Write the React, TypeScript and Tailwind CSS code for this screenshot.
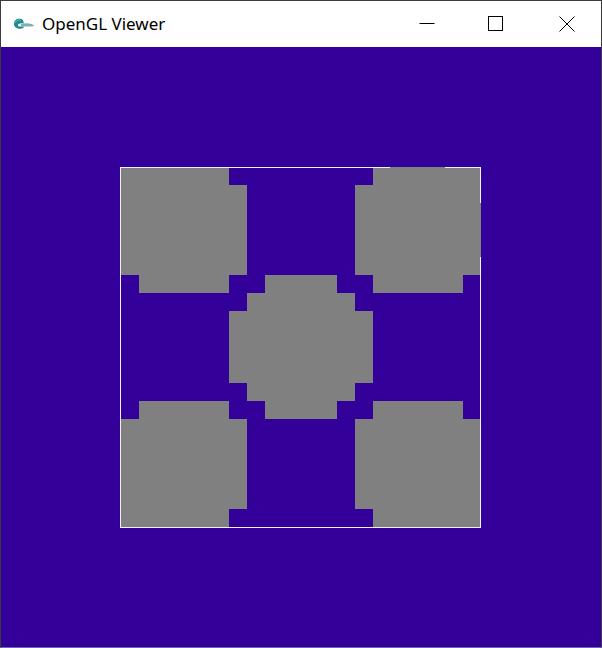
import React from 'react'

type Cell = [number, number, number, number]

// [rowStart, rowEnd, colStart, colEnd] on the 20x20 grid, cell = 18px
const cells: Cell[] = [
  // top left
  [0, 0, 0, 5], [1, 5, 0, 6], [6, 6, 1, 5],
  // top right
  [0, 0, 14, 19], [1, 5, 13, 19], [6, 6, 14, 18],
  // centre
  [6, 6, 8, 11], [7, 7, 7, 12], [8, 11, 6, 13], [12, 12, 7, 12], [13, 13, 8, 11],
  // bottom left
  [13, 13, 1, 5], [14, 18, 0, 6], [19, 19, 0, 5],
  // bottom right
  [13, 13, 14, 18], [14, 18, 13, 19], [19, 19, 14, 19],
]

const AppIcon = () => (
  <svg width="22" height="12" viewBox="0 0 22 12">
    <path d="M9 1.2C5.8 0.2 1.5 1.3 1 5.5c-0.4 3.6 3.6 6 7.6 5 1.6-0.4 2.4-1.2 2.6-2H6.4C4.8 8.5 4.4 6.8 5.6 5.9 6.8 5 9.3 5.2 10.8 5.4 10.6 3.8 10.4 1.7 9 1.2z" fill="#1f8a8c" />
    <path d="M8 5.8c3-0.6 7 -1 10.5 0.1 1.6 0.5 2.6 1.3 2.3 1.9-0.3 0.6-2.4 0.8-5 0.8H9.5C8 8.6 7.2 7.6 8 5.8z" fill="#7fb0b6" />
    <path d="M2.4 5c0.6-2.2 3-3.3 5.6-2.9" stroke="#5cc0c0" strokeWidth="1" fill="none" />
  </svg>
)

const TitleBar = () => (
  <div className="flex h-[46px] items-center bg-white">
    <div className="ml-[12px] flex h-[12px] w-[22px] items-center">
      <AppIcon />
    </div>
    <span className="ml-[7px] text-[17px] text-black" style={{ fontFamily: '"Noto Sans", "Open Sans", sans-serif' }}>
      OpenGL Viewer
    </span>
    <div className="ml-auto flex h-full">
      <div className="flex h-full w-[70px] items-center justify-center pl-[1px]">
        <svg width="16" height="16" viewBox="0 0 16 16">
          <path d="M0.5 7.5H15.5" stroke="#000" strokeWidth="1" />
        </svg>
      </div>
      <div className="flex h-full w-[70px] items-center justify-center">
        <svg width="16" height="16" viewBox="0 0 16 16">
          <rect x="0.5" y="0.5" width="14" height="14" stroke="#000" strokeWidth="1" fill="none" />
        </svg>
      </div>
      <div className="flex h-full w-[70px] items-center justify-center pl-[1px]">
        <svg width="16" height="16" viewBox="0 0 16 16">
          <path d="M0.5 0.5L15.5 15.5M15.5 0.5L0.5 15.5" stroke="#000" strokeWidth="1" />
        </svg>
      </div>
    </div>
  </div>
)

const Viewport = () => (
  <div className="h-[600px] w-[600px] bg-[#330099]">
    <svg width="600" height="600" viewBox="0 0 600 600" shapeRendering="crispEdges">
      {cells.map(([r0, r1, c0, c1], i) => (
        <rect
          key={i}
          x={120 + c0 * 18}
          y={120 + r0 * 18}
          width={(c1 - c0 + 1) * 18}
          height={(r1 - r0 + 1) * 18}
          fill="#808080"
        />
      ))}
      <rect x="119.5" y="120.5" width="360" height="360" fill="none" stroke="#f2f0f8" strokeWidth="1" />
      <rect x="389" y="120" width="55" height="1" fill="#808080" />
      <rect x="478" y="156" width="2" height="54" fill="#808080" />
    </svg>
  </div>
)

const App: React.FC = () => {
  return (
    <div className="h-[648px] w-[602px] border border-[#3c3c3c] border-b-[#7268b0] bg-white">
      <TitleBar />
      <Viewport />
    </div>
  )
}

export default App
